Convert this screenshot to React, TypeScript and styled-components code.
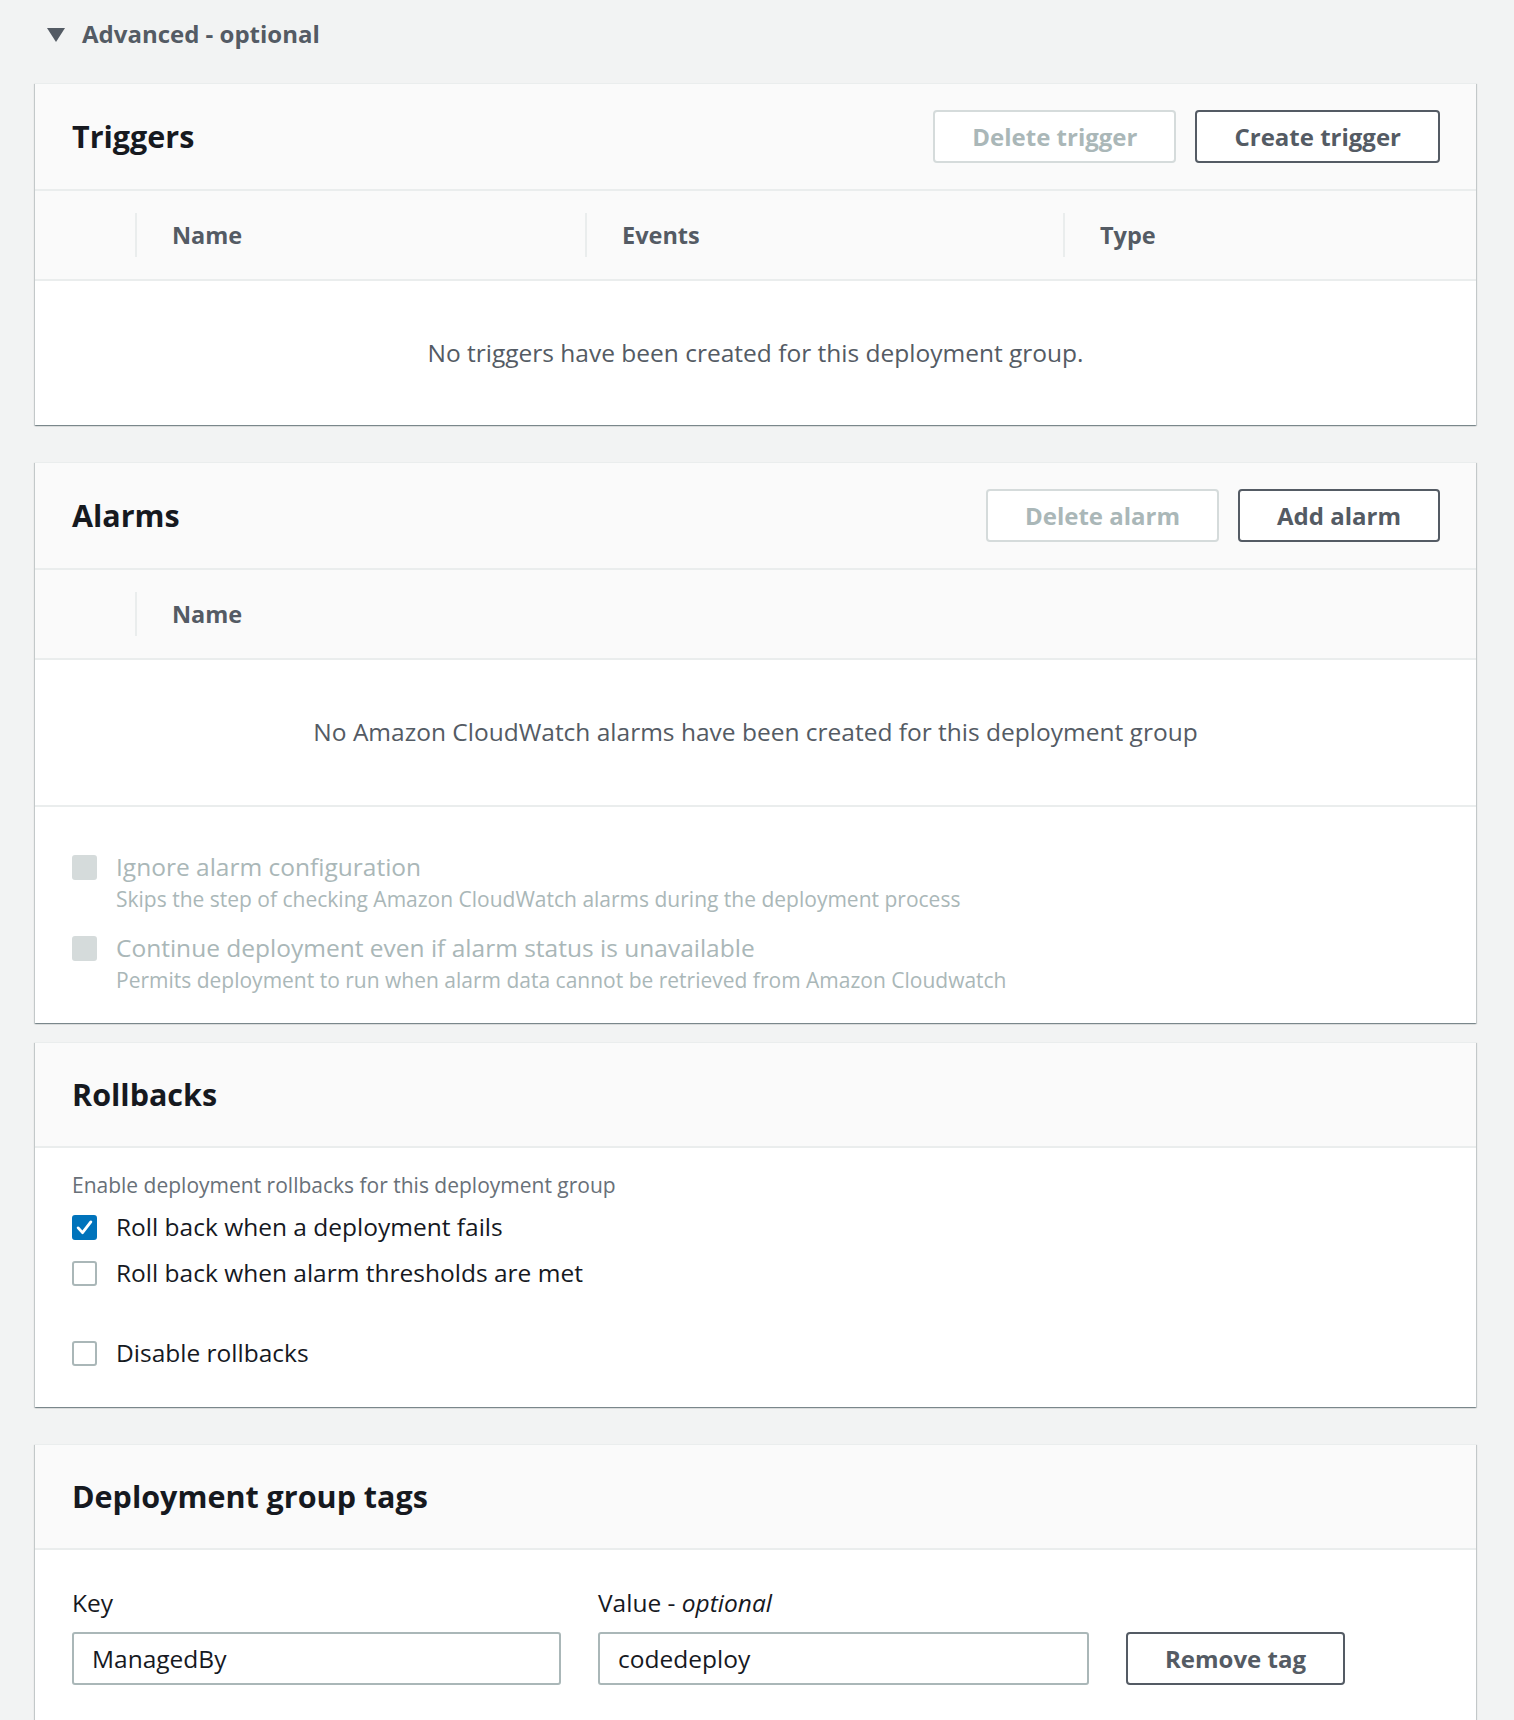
import React from 'react';
import styled, { createGlobalStyle } from 'styled-components';

const GlobalStyle = createGlobalStyle`
  body {
    margin: 0;
    background: #f2f3f3;
    font-family: "Open Sans", "Noto Sans", sans-serif;
    color: #16191f;
  }
`;

const Page = styled.div`
  padding: 17px 38px 0 35px;
`;

const Expander = styled.div`
  display: flex;
  align-items: center;
  gap: 17px;
  padding-left: 12px;
  margin-bottom: 32px;
  font-size: 24px;
  line-height: 34px;
  font-weight: 700;
  color: #545b64;

  svg {
    margin-top: 2px;
  }
`;

const Card = styled.section<{ $gap?: number }>`
  background: #fff;
  border-top: 1px solid #eaeded;
  box-shadow: 0 1px 1px 0 rgba(0, 28, 36, 0.3), 1px 1px 1px 0 rgba(0, 28, 36, 0.15),
    -1px 1px 1px 0 rgba(0, 28, 36, 0.15);
  margin-bottom: ${(p) => p.$gap ?? 37}px;
`;

const CardHeader = styled.header`
  display: flex;
  align-items: center;
  justify-content: space-between;
  padding: 26px 36px 26px 37px;
  background: #fafafa;
  border-bottom: 2px solid #eaeded;
`;

const Title = styled.h2`
  margin: 0;
  font-size: 30.5px;
  line-height: 51px;
  font-weight: 700;
  color: #16191f;
`;

const Actions = styled.div`
  display: flex;
  gap: 19px;
`;

const Button = styled.button<{ $disabled?: boolean }>`
  height: 53px;
  padding: 0 37px;
  background: #fff;
  border: 2px solid ${(p) => (p.$disabled ? '#d5dbdb' : '#545b64')};
  border-radius: 4px;
  font-family: inherit;
  font-size: 24px;
  font-weight: 700;
  color: ${(p) => (p.$disabled ? '#aab7b8' : '#545b64')};
  cursor: ${(p) => (p.$disabled ? 'default' : 'pointer')};
`;

const TableHead = styled.div<{ $cols: string }>`
  display: grid;
  grid-template-columns: ${(p) => p.$cols};
  align-items: center;
  height: 88px;
  background: #fafafa;
  border-bottom: 2px solid #eaeded;
`;

const HeadCell = styled.div<{ $first?: boolean }>`
  display: flex;
  align-items: center;
  height: 44px;
  padding-left: 35px;
  border-left: ${(p) => (p.$first ? 'none' : '2px solid #eaeded')};
  font-size: 23.5px;
  font-weight: 700;
  color: #545b64;
`;

const Empty = styled.div<{ $divider?: boolean }>`
  padding: 55px 0 ${(p) => (p.$divider ? 56 : 55)}px;
  text-align: center;
  font-size: 24.5px;
  line-height: 34px;
  color: #545b64;
  border-bottom: ${(p) => (p.$divider ? '2px solid #eaeded' : 'none')};
`;

const CheckSection = styled.div`
  padding: 43px 37px 28px;
`;

const Option = styled.div<{ $top?: number }>`
  display: flex;
  align-items: flex-start;
  gap: 19px;
  margin-top: ${(p) => p.$top ?? 0}px;
`;

const Box = styled.span<{ $state: 'on' | 'off' | 'disabled' }>`
  flex: none;
  box-sizing: border-box;
  width: 25px;
  height: 25px;
  margin-top: 5px;
  border-radius: 3px;
  display: flex;
  align-items: center;
  justify-content: center;
  background: ${(p) => (p.$state === 'on' ? '#0073bb' : p.$state === 'disabled' ? '#d5dbdb' : '#fff')};
  border: 2px solid
    ${(p) => (p.$state === 'on' ? '#0073bb' : p.$state === 'disabled' ? '#d5dbdb' : '#aab7b8')};
`;

const OptionText = styled.div<{ $disabled?: boolean }>`
  display: flex;
  flex-direction: column;
  color: ${(p) => (p.$disabled ? '#aab7b8' : '#16191f')};
`;

const OptionLabel = styled.span`
  font-size: 24.5px;
  line-height: 34px;
`;

const OptionHint = styled.span`
  font-size: 21px;
  line-height: 30px;
`;

const RollbackBody = styled.div`
  padding: 22px 37px 37px;
`;

const Hint = styled.p`
  margin: 0 0 10px;
  font-size: 21px;
  line-height: 30px;
  color: #687078;
`;

const TagGrid = styled.div`
  display: grid;
  grid-template-columns: 489px 491px auto;
  column-gap: 37px;
  row-gap: 12px;
  justify-content: start;
  padding: 36px 37px 80px;
`;

const FieldLabel = styled.label`
  font-size: 24.5px;
  line-height: 34px;
  color: #16191f;

  em {
    font-style: italic;
  }
`;

const Input = styled.input`
  box-sizing: border-box;
  height: 53px;
  width: 100%;
  padding: 0 18px;
  border: 2px solid #aab7b8;
  border-radius: 3px;
  font-family: inherit;
  font-size: 24.5px;
  color: #16191f;
  outline: none;
`;

const Check = () => (
  <svg width="19" height="19" viewBox="0 0 24 24">
    <polyline points="4,12.5 9.5,18.5 20,5" fill="none" stroke="#fff" strokeWidth="3.6" strokeLinecap="round" strokeLinejoin="round" />
  </svg>
);

const Caret = () => (
  <svg width="18" height="14" viewBox="0 0 18 14">
    <polygon points="0,0 18,0 9,14" fill="#545b64" />
  </svg>
);

export default function App() {
  return (
    <>
      <GlobalStyle />
      <Page>
        <Expander>
          <Caret />
          Advanced - optional
        </Expander>

        <Card>
          <CardHeader>
            <Title>Triggers</Title>
            <Actions>
              <Button $disabled>Delete trigger</Button>
              <Button>Create trigger</Button>
            </Actions>
          </CardHeader>
          <TableHead $cols="100px 450px 478px 1fr">
            <HeadCell $first />
            <HeadCell>Name</HeadCell>
            <HeadCell>Events</HeadCell>
            <HeadCell>Type</HeadCell>
          </TableHead>
          <Empty>No triggers have been created for this deployment group.</Empty>
        </Card>

        <Card $gap={19}>
          <CardHeader>
            <Title>Alarms</Title>
            <Actions>
              <Button $disabled>Delete alarm</Button>
              <Button>Add alarm</Button>
            </Actions>
          </CardHeader>
          <TableHead $cols="100px 1fr">
            <HeadCell $first />
            <HeadCell>Name</HeadCell>
          </TableHead>
          <Empty $divider>No Amazon CloudWatch alarms have been created for this deployment group</Empty>
          <CheckSection>
            <Option>
              <Box $state="disabled" />
              <OptionText $disabled>
                <OptionLabel>Ignore alarm configuration</OptionLabel>
                <OptionHint>Skips the step of checking Amazon CloudWatch alarms during the deployment process</OptionHint>
              </OptionText>
            </Option>
            <Option $top={17}>
              <Box $state="disabled" />
              <OptionText $disabled>
                <OptionLabel>Continue deployment even if alarm status is unavailable</OptionLabel>
                <OptionHint>Permits deployment to run when alarm data cannot be retrieved from Amazon Cloudwatch</OptionHint>
              </OptionText>
            </Option>
          </CheckSection>
        </Card>

        <Card>
          <CardHeader>
            <Title>Rollbacks</Title>
          </CardHeader>
          <RollbackBody>
            <Hint>Enable deployment rollbacks for this deployment group</Hint>
            <Option>
              <Box $state="on">
                <Check />
              </Box>
              <OptionText>
                <OptionLabel>Roll back when a deployment fails</OptionLabel>
              </OptionText>
            </Option>
            <Option $top={12}>
              <Box $state="off" />
              <OptionText>
                <OptionLabel>Roll back when alarm thresholds are met</OptionLabel>
              </OptionText>
            </Option>
            <Option $top={46}>
              <Box $state="off" />
              <OptionText>
                <OptionLabel>Disable rollbacks</OptionLabel>
              </OptionText>
            </Option>
          </RollbackBody>
        </Card>

        <Card>
          <CardHeader>
            <Title>Deployment group tags</Title>
          </CardHeader>
          <TagGrid>
            <FieldLabel>Key</FieldLabel>
            <FieldLabel>
              Value - <em>optional</em>
            </FieldLabel>
            <span />
            <Input defaultValue="ManagedBy" />
            <Input defaultValue="codedeploy" />
            <Button>Remove tag</Button>
          </TagGrid>
        </Card>
      </Page>
    </>
  );
}
